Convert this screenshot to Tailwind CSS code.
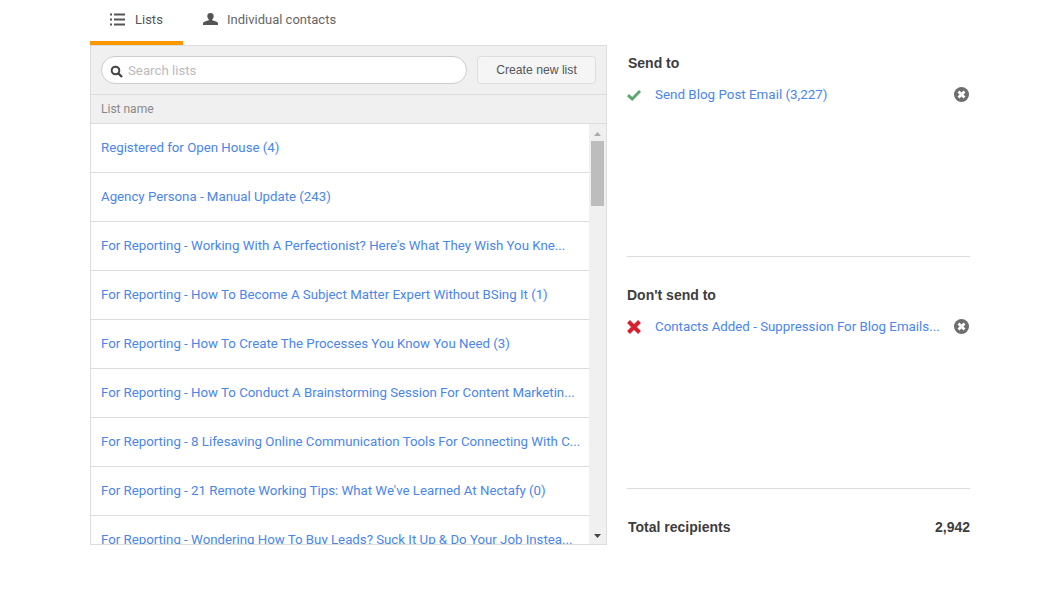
<!DOCTYPE html>
<html lang="en">

<head>
    <meta charset="UTF-8">
    <script src="https://cdn.jsdelivr.net/npm/@tailwindcss/browser@4"></script>
    <title>Recipients</title>
</head>

<body class="bg-white font-['Roboto',sans-serif] text-[13.25px] text-[#4a4a4a]">
    <div class="w-[1060px] h-[614px] overflow-hidden pl-[90px] flex">
        <!-- left column -->
        <div class="w-[517px] shrink-0">
            <div class="flex h-[45px]">
                <div class="w-[93px] h-[45px] border-b-4 border-[#ff9800] flex items-center pl-[20px] pb-[3px] gap-[10px]">
                    <svg class="w-[15px] h-[13px]" viewBox="0 0 15 13" fill="#555">
                        <rect x="0" y="0.5" width="2" height="2" />
                        <rect x="0" y="5.5" width="2" height="2" />
                        <rect x="0" y="10.5" width="2" height="2" />
                        <rect x="4" y="0.5" width="11" height="2" />
                        <rect x="4" y="5.5" width="11" height="2" />
                        <rect x="4" y="10.5" width="11" height="2" />
                    </svg>
                    <span class="text-[#555] text-[13px] mt-[1px]">Lists</span>
                </div>
                <div class="flex items-center pl-[20px] pb-[7px] gap-[9px] h-[45px]">
                    <svg class="w-[15px] h-[12px]" viewBox="0 0 15 14" preserveAspectRatio="none" fill="#555">
                        <path d="M7.500 0C5.400 0 4.300 1.400 4.300 3.400c0 1.600.6 3 1.500 3.800v1.300C3.800 9.400 0 10 0 12.300V14h15v-1.700c0-2.300-3.800-2.900-5.800-3.800V7.200c.9-.8 1.500-2.200 1.500-3.800C10.700 1.400 9.600 0 7.500 0z" />
                    </svg>
                    <span class="text-[#666] text-[13px] mt-[1px]">Individual contacts</span>
                </div>
            </div>

            <div class="w-[517px] h-[500px] border border-[#ddd] flex flex-col overflow-hidden">
                <div class="h-[49px] shrink-0 bg-[#f0f0f0] border-b border-[#ddd] flex items-center pl-[10px] pr-[10px] gap-[10px]">
                    <div class="w-[366px] h-[28px] bg-white border border-[#ccc] rounded-full flex items-center pl-[8px] pt-[2px] gap-[5px]">
                        <svg class="w-[13px] h-[13px]" viewBox="0 0 13 13" fill="none" stroke="#444">
                            <circle cx="5.500" cy="5.500" r="3.800" stroke-width="2" />
                            <path d="M8.500 8.500L12 12" stroke-width="2.400" />
                        </svg>
                        <span class="text-[#bbb] text-[13.25px]">Search lists</span>
                    </div>
                    <button class="w-[119px] h-[28px] bg-[#f5f5f5] border border-[#ddd] rounded-[4px] text-[12.2px] text-[#555] font-['Liberation_Sans',sans-serif]">Create new list</button>
                </div>
                <div class="h-[29px] shrink-0 bg-[#f0f0f0] border-b border-[#ddd] flex items-center pl-[10px] text-[12px] text-[#888]">List name</div>
                <div class="flex flex-1 min-h-0">
                    <div class="w-[499px] overflow-hidden text-[#4a86e8] whitespace-nowrap">
                        <div class="h-[49px] border-b border-[#ddd] flex items-center pl-[10px]">Registered for Open House (4)</div>
                        <div class="h-[49px] border-b border-[#ddd] flex items-center pl-[10px]">Agency Persona - Manual Update (243)</div>
                        <div class="h-[49px] border-b border-[#ddd] flex items-center pl-[10px]">For Reporting - Working With A Perfectionist? Here's What They Wish You Kne...</div>
                        <div class="h-[49px] border-b border-[#ddd] flex items-center pl-[10px]">For Reporting - How To Become A Subject Matter Expert Without BSing It (1)</div>
                        <div class="h-[49px] border-b border-[#ddd] flex items-center pl-[10px]">For Reporting - How To Create The Processes You Know You Need (3)</div>
                        <div class="h-[49px] border-b border-[#ddd] flex items-center pl-[10px]">For Reporting - How To Conduct A Brainstorming Session For Content Marketin...</div>
                        <div class="h-[49px] border-b border-[#ddd] flex items-center pl-[10px]">For Reporting - 8 Lifesaving Online Communication Tools For Connecting With C...</div>
                        <div class="h-[49px] border-b border-[#ddd] flex items-center pl-[10px]">For Reporting - 21 Remote Working Tips: What We've Learned At Nectafy (0)</div>
                        <div class="h-[49px] border-b border-[#ddd] flex items-center pl-[10px]">For Reporting - Wondering How To Buy Leads? Suck It Up &amp; Do Your Job Instea...</div>
                    </div>
                    <!-- scrollbar -->
                    <div class="w-[17px] bg-[#f0f0f0] flex flex-col items-center">
                        <svg class="w-[7px] h-[4px] mt-[8px]" viewBox="0 0 7 4" fill="#aaa">
                            <path d="M3.500 0L7 4H0z" />
                        </svg>
                        <div class="w-[13px] h-[65px] bg-[#bdbdbd] mt-[5px]"></div>
                        <div class="flex-1"></div>
                        <svg class="w-[7px] h-[4px] mb-[6px]" viewBox="0 0 7 4" fill="#444">
                            <path d="M0 0h7L3.500 4z" />
                        </svg>
                    </div>
                </div>
            </div>
        </div>

        <!-- right column -->
        <div class="w-[343px] ml-[20px] pt-[45px] font-['Liberation_Sans',sans-serif]">
            <div class="h-[212px] border-b border-[#ddd]">
                <div class="h-[36px] flex items-center pl-[1px] text-[14px] font-bold text-[#3d3d3d]">Send to</div>
                <div class="h-[28px] flex items-center font-['Roboto',sans-serif]">
                    <svg class="w-[14px] h-[11px] shrink-0" viewBox="0 0 14 11" fill="#5ba56a">
                        <path d="M5.200 11L0 6.200l2-2.100 3.200 3L12 0l2 2z" />
                    </svg>
                    <span class="ml-[14px] text-[#4a86e8] text-[13.4px]">Send Blog Post Email (3,227)</span>
                    <svg class="w-[15px] h-[15px] ml-auto mr-[1px] mb-[1px] shrink-0" viewBox="0 0 15 15">
                        <circle cx="7.500" cy="7.500" r="7.500" fill="#6e6e6e" />
                        <path d="M4.500 4.500l6 6M10.500 4.500l-6 6" stroke="#fff" stroke-width="2.800" />
                    </svg>
                </div>
            </div>
            <div class="h-[232px] border-b border-[#ddd] pt-[22px]">
                <div class="h-[32px] flex items-center text-[14px] font-bold text-[#3d3d3d]">Don't send to</div>
                <div class="h-[32px] flex items-center font-['Roboto',sans-serif]">
                    <svg class="w-[14px] h-[14px] shrink-0" viewBox="0 0 14 14" fill="none" stroke="#d9202f" stroke-width="4">
                        <path d="M1.500 1.500l11 11M12.500 1.500l-11 11" />
                    </svg>
                    <span class="ml-[14px] text-[#4a86e8] text-[13.3px] whitespace-nowrap">Contacts Added - Suppression For Blog Emails...</span>
                    <svg class="w-[15px] h-[15px] ml-auto mr-[1px] mb-[1px] shrink-0" viewBox="0 0 15 15">
                        <circle cx="7.500" cy="7.500" r="7.500" fill="#6e6e6e" />
                        <path d="M4.500 4.500l6 6M10.500 4.500l-6 6" stroke="#fff" stroke-width="2.800" />
                    </svg>
                </div>
            </div>
            <div class="h-[76px] flex items-center justify-between pl-[1px] text-[14px] font-bold text-[#3d3d3d]">
                <span>Total recipients</span>
                <span>2,942</span>
            </div>
        </div>
    </div>
</body>

</html>
